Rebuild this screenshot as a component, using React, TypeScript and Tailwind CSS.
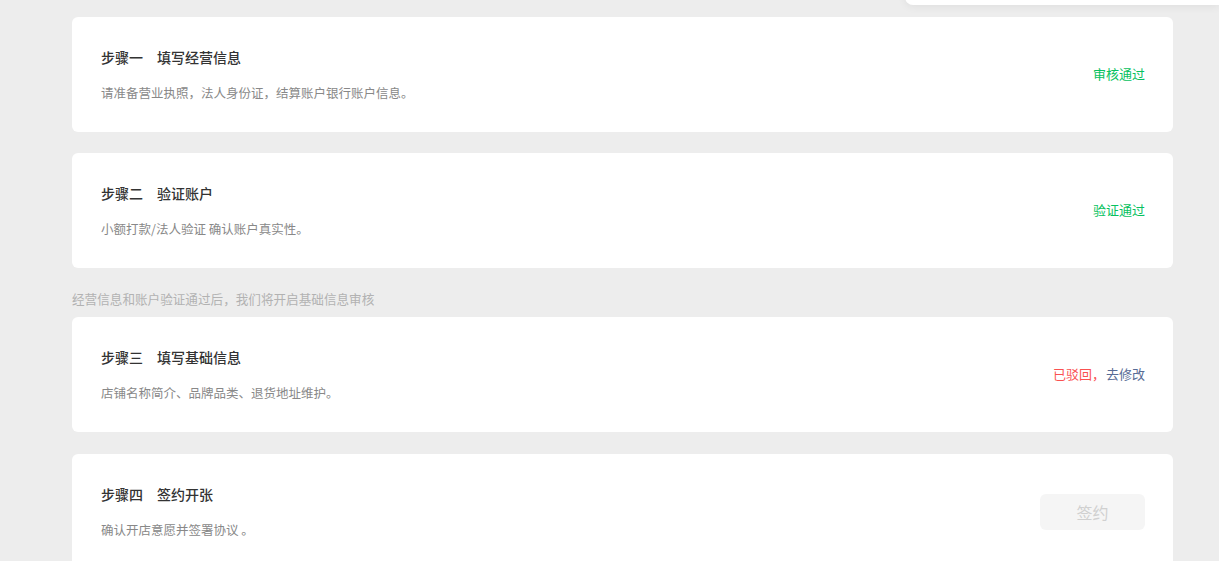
import React from "react";

type Step = {
  no: string;
  title: string;
  desc: string;
  status: React.ReactNode;
};

const font = { fontFamily: '"Noto Sans CJK SC", "Noto Sans", sans-serif' };

function StepCard({ step }: { step: Step }) {
  return (
    <div className="flex h-[115px] w-[1101px] items-center justify-between rounded-[6px] bg-white pl-[29px] pr-[28px]">
      <div className="flex flex-col pt-[1px]">
        <div className="-mt-[2px] text-[14px] font-medium leading-[20px] text-[#333333]">
          {step.no}
          <span className="ml-[14px]">{step.title}</span>
        </div>
        <div className="mt-[17px] text-[12.5px] leading-[18px] text-[#888888]">{step.desc}</div>
      </div>
      <div className="-mt-[2px] flex items-center">{step.status}</div>
    </div>
  );
}

export default function App() {
  const steps: Step[] = [
    {
      no: "步骤一",
      title: "填写经营信息",
      desc: "请准备营业执照，法人身份证，结算账户银行账户信息。",
      status: <span className="text-[13px] leading-[18px] text-[#07c160]">审核通过</span>,
    },
    {
      no: "步骤二",
      title: "验证账户",
      desc: "小额打款/法人验证 确认账户真实性。",
      status: <span className="text-[13px] leading-[18px] text-[#07c160]">验证通过</span>,
    },
    {
      no: "步骤三",
      title: "填写基础信息",
      desc: "店铺名称简介、品牌品类、退货地址维护。",
      status: (
        <span className="text-[13px] leading-[18px]">
          <span className="text-[#fa5151]">已驳回，</span>
          <span className="ml-[1px] text-[#576b95]">去修改</span>
        </span>
      ),
    },
    {
      no: "步骤四",
      title: "签约开张",
      desc: "确认开店意愿并签署协议 。",
      status: (
        <button
          type="button"
          disabled
          className="mt-[2px] flex h-[36px] w-[105px] items-center justify-center rounded-[6px] bg-[#f5f5f5] text-[16px] text-[#d0d0d0]"
        >
          签约
        </button>
      ),
    },
  ];

  return (
    <div className="relative h-[561px] w-[1219px] overflow-hidden bg-[#ededed]" style={font}>
      {/* popover edge peeking in at top right */}
      <div className="absolute right-0 top-[-20px] h-[25px] w-[314px] rounded-bl-[8px] bg-white shadow-[0_2px_8px_rgba(0,0,0,0.06)]" />

      <div className="flex flex-col pl-[72px] pt-[17px]">
        <StepCard step={steps[0]} />
        <div className="mt-[21px]">
          <StepCard step={steps[1]} />
        </div>
        <div className="mt-[21px] h-[20px] text-[12.6px] leading-[20px] text-[#b2b2b2]">
          经营信息和账户验证通过后，我们将开启基础信息审核
        </div>
        <div className="mt-[8px]">
          <StepCard step={steps[2]} />
        </div>
        <div className="mt-[22px]">
          <StepCard step={steps[3]} />
        </div>
      </div>
    </div>
  );
}
